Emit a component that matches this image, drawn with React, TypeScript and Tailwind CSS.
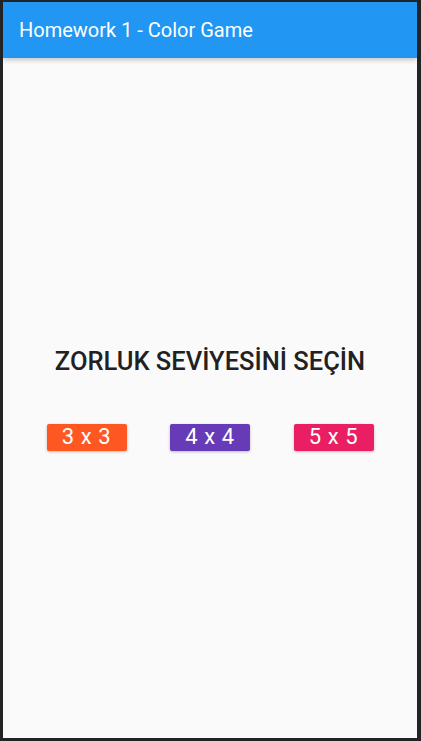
import React from 'react';

const levels = [
  { label: '3 x 3', color: 'bg-[#FF5722]' },
  { label: '4 x 4', color: 'bg-[#673AB7]' },
  { label: '5 x 5', color: 'bg-[#E91E63]' },
];

export default function App() {
  return (
    <div
      className="w-[421px] h-[741px] bg-[#222325] pt-[2px] pl-[3px] pr-[4px] pb-[3px] flex"
      style={{ fontFamily: 'Roboto, "Noto Sans", sans-serif' }}
    >
      <div className="flex-1 flex flex-col bg-[#FAFAFA] overflow-hidden">
        {/* App bar */}
        <div className="relative z-10 h-[56px] shrink-0 bg-[#2196F3] flex items-center px-[16px] shadow-[0_2px_5px_rgba(0,0,0,0.22)]">
          <span className="text-white text-[20px] leading-none">Homework 1 - Color Game</span>
        </div>

        {/* Body */}
        <div className="flex-1 flex flex-col items-center justify-center">
          <h1 className="text-[#212121] text-[25.5px] leading-[30px] font-medium">
            ZORLUK SEVİYESİNİ SEÇİN
          </h1>
          <div className="mt-[48px] w-full flex justify-evenly">
            {levels.map((level) => (
              <button
                key={level.label}
                className={`${level.color} w-[80px] h-[27px] rounded-[2px] text-white text-[22px] leading-none tracking-[0.6px] shadow-[0_1px_3px_rgba(0,0,0,0.25)] flex items-center justify-center`}
              >
                {level.label}
              </button>
            ))}
          </div>
        </div>
      </div>
    </div>
  );
}
